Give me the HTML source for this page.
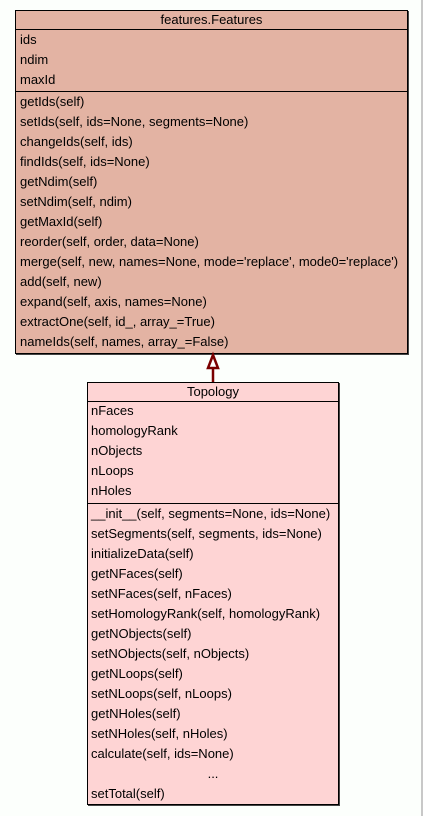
<!DOCTYPE html>
<html><head><meta charset="utf-8"><style>
html,body{margin:0;padding:0;width:423px;height:816px;overflow:hidden;background:#fcfffc;position:relative;font-family:"Liberation Sans",Arial,sans-serif;font-size:13px;color:#000}
.vl{position:absolute;left:421px;top:0;width:2px;height:816px;background:#c8c8c8}
.box{position:absolute;border:1px solid #000;box-shadow:1px 1px 0 #444;box-sizing:border-box}
.t{position:absolute;left:0;right:0;text-align:center;height:18px;line-height:18px}
.sep{position:absolute;left:0;right:0;height:1px;background:#000}
.r{position:absolute;left:4px;height:20px;line-height:20px;white-space:nowrap}
.b .r{left:3px}
</style></head><body>
<div class="vl"></div>
<div class="box" style="left:15px;top:10px;width:393px;height:344px;background:#e3b3a3">
<div class="t" style="top:0">features.Features</div>
<div class="sep" style="top:18px"></div>
<div class="r" style="top:19px">ids</div>
<div class="r" style="top:39px">ndim</div>
<div class="r" style="top:59px">maxId</div>
<div class="sep" style="top:80px"></div>
<div class="r" style="top:81px">getIds(self)</div>
<div class="r" style="top:101px">setIds(self, ids=None, segments=None)</div>
<div class="r" style="top:121px">changeIds(self, ids)</div>
<div class="r" style="top:141px">findIds(self, ids=None)</div>
<div class="r" style="top:161px">getNdim(self)</div>
<div class="r" style="top:181px">setNdim(self, ndim)</div>
<div class="r" style="top:201px">getMaxId(self)</div>
<div class="r" style="top:221px">reorder(self, order, data=None)</div>
<div class="r" style="top:241px">merge(self, new, names=None, mode='replace', mode0='replace')</div>
<div class="r" style="top:261px">add(self, new)</div>
<div class="r" style="top:281px">expand(self, axis, names=None)</div>
<div class="r" style="top:301px">extractOne(self, id_, array_=True)</div>
<div class="r" style="top:321px">nameIds(self, names, array_=False)</div>
</div>
<svg style="position:absolute;left:0;top:0" width="423" height="816">
<line x1="213" y1="368" x2="213" y2="383" stroke="#7a0000" stroke-width="2.5"/>
<polygon points="213,355 208,368 218,368" fill="#fff" stroke="#7a0000" stroke-width="2.5"/>
</svg>
<div class="box b" style="left:87px;top:382px;width:252px;height:423px;background:#fed4d4">
<div class="t" style="top:0">Topology</div>
<div class="sep" style="top:18px"></div>
<div class="r" style="top:18px">nFaces</div>
<div class="r" style="top:38px">homologyRank</div>
<div class="r" style="top:58px">nObjects</div>
<div class="r" style="top:78px">nLoops</div>
<div class="r" style="top:98px">nHoles</div>
<div class="sep" style="top:120px"></div>
<div class="r" style="top:121px">__init__(self, segments=None, ids=None)</div>
<div class="r" style="top:141px">setSegments(self, segments, ids=None)</div>
<div class="r" style="top:161px">initializeData(self)</div>
<div class="r" style="top:181px">getNFaces(self)</div>
<div class="r" style="top:201px">setNFaces(self, nFaces)</div>
<div class="r" style="top:221px">setHomologyRank(self, homologyRank)</div>
<div class="r" style="top:241px">getNObjects(self)</div>
<div class="r" style="top:261px">setNObjects(self, nObjects)</div>
<div class="r" style="top:281px">getNLoops(self)</div>
<div class="r" style="top:301px">setNLoops(self, nLoops)</div>
<div class="r" style="top:321px">getNHoles(self)</div>
<div class="r" style="top:341px">setNHoles(self, nHoles)</div>
<div class="r" style="top:361px">calculate(self, ids=None)</div>
<div class="r" style="top:381px;left:0;right:0;text-align:center">...</div>
<div class="r" style="top:401px">setTotal(self)</div>
</div>
</body></html>
